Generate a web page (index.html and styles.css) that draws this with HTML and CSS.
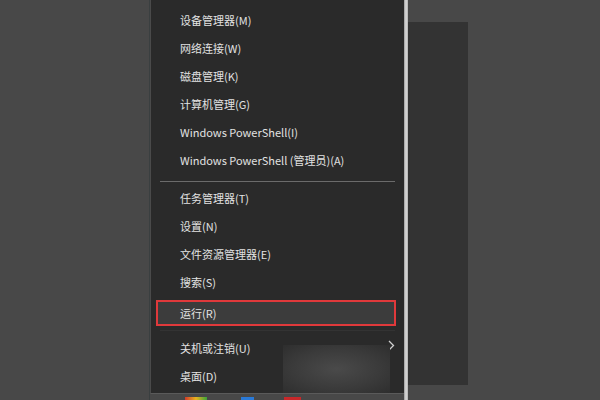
FILE: index.html
```html
<!DOCTYPE html>
<html lang="zh-CN">
<head>
<meta charset="utf-8">
<link rel="stylesheet" href="styles.css">
</head>
<body>
<div class="screen">
  <div class="left-side"></div>
  <div class="menu">
    <ul class="items">
      <li class="item">设备管理器(M)</li>
      <li class="item">网络连接(W)</li>
      <li class="item">磁盘管理(K)</li>
      <li class="item">计算机管理(G)</li>
      <li class="item">Windows PowerShell(I)</li>
      <li class="item">Windows PowerShell (管理员)(A)</li>
      <li class="sep"></li>
      <li class="item">任务管理器(T)</li>
      <li class="item">设置(N)</li>
      <li class="item">文件资源管理器(E)</li>
      <li class="item">搜索(S)</li>
      <li class="item active">运行(R)</li>
      <li class="sep faint"></li>
      <li class="item has-sub">关机或注销(U)<span class="chev">
        <svg width="7" height="11" viewBox="0 0 7 11"><path d="M1 1 L5.5 5.5 L1 10" fill="none" stroke="#cfcfcf" stroke-width="1.3"/></svg>
      </span></li>
      <li class="item">桌面(D)</li>
    </ul>
    <div class="blur"></div>
    <div class="taskbar">
      <span class="dot multi"></span>
      <span class="dot blue"></span>
      <span class="dot red"></span>
    </div>
  </div>
  <div class="bar"></div>
  <div class="right">
    <div class="panel"></div>
  </div>
</div>
</body>
</html>
```
FILE: styles.css
```css
html, body {
  margin: 0;
  padding: 0;
  background: #484848;
  width: 600px;
  height: 400px;
  overflow: hidden;
}
.screen {
  display: flex;
  height: 400px;
  font-family: "Noto Sans CJK SC", "Noto Sans", sans-serif;
}
.left-side {
  width: 150px;
  flex: none;
  border-right: 1px solid #3a3f40;
  box-sizing: border-box;
}
.menu {
  position: relative;
  width: 254px;
  flex: none;
  height: 394px;
  background: #2a2a2a;
  border-left: 1px solid #4a4a4a;
  border-bottom: 1px solid #5a5a5a;
  box-sizing: border-box;
}
.items {
  list-style: none;
  margin: 0;
  padding: 6px 0 0 0;
}
.item {
  height: 28px;
  line-height: 28px;
  padding-left: 29px;
  font-size: 11px;
  color: #e2e2e2;
  white-space: nowrap;
  position: relative;
}
.sep {
  height: 1px;
  margin: 7px 9px 2px 9px;
  background: #6b6b6b;
}
.sep.faint {
  margin: 4px 9px 3px 9px;
  background: #333;
}
.item.active {
  margin: 4px 8px 0 5px;
  height: 22px;
  line-height: 22px;
  padding-left: 22px;
  background: #3c3c3c;
  border: 2px solid #e0393b;
}
.chev {
  position: absolute;
  right: 9px;
  top: 6px;
  line-height: 0;
}
.blur {
  position: absolute;
  left: 132px;
  top: 345px;
  width: 107px;
  height: 48px;
  background: radial-gradient(ellipse at 50% 50%, #4a4a4a 0%, #3a3a3a 60%, #2e2e2e 100%);
}
.taskbar {
  position: absolute;
  left: 0;
  right: 0;
  top: 394px;
  height: 6px;
}
.dot {
  position: absolute;
  top: 3px;
  height: 4px;
}
.dot.multi { left: 34px; width: 22px; background: linear-gradient(90deg, #d23a2a, #e8b320, #3aa53a); }
.dot.blue { left: 90px; width: 13px; background: #2a7ad8; }
.dot.red { left: 133px; width: 17px; background: #c8282a; }
.bar {
  width: 4px;
  flex: none;
  background: linear-gradient(90deg, #9a9a9a, #dcdcdc, #b0b0b0);
}
.right {
  flex: 1;
  padding-top: 22px;
}
.panel {
  width: 60px;
  height: 363px;
  background: #333333;
}
```
